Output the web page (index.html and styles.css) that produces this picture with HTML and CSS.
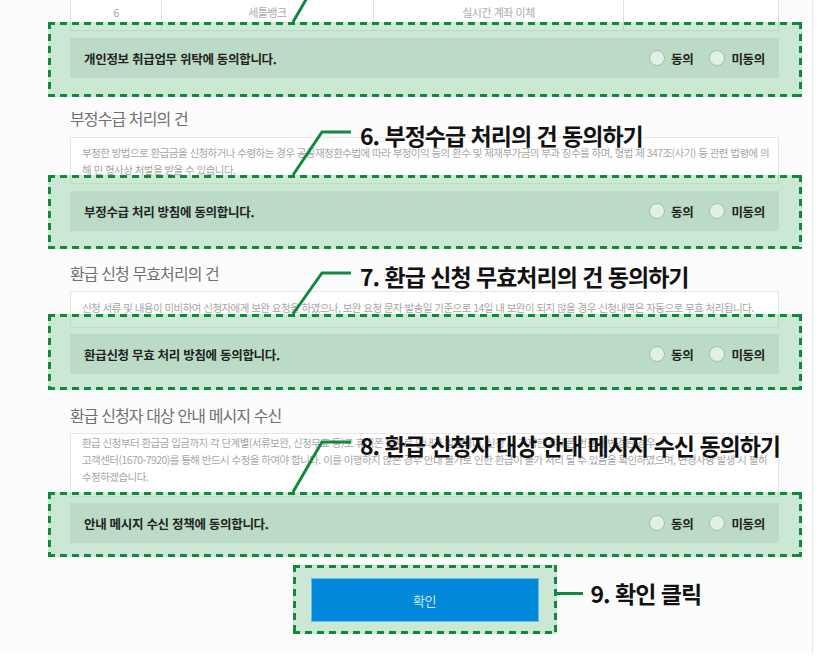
FILE: index.html
```html
<!DOCTYPE html>
<html lang="ko">
<head>
    <meta charset="UTF-8">
    <meta name="viewport" content="width=device-width, initial-scale=1.0">
    <title>환급 신청 동의</title>
    <link rel="stylesheet" href="styles.css">
</head>
<body>
    <div class="page">
        <div class="bank-table">
            <div class="cell">6</div>
            <div class="cell">세틀뱅크</div>
            <div class="cell">실시간 계좌 이체</div>
            <div class="cell"></div>
        </div>

        <div class="hl hl-1">
            <div class="callout callout-5">
                <svg width="62" height="53" viewBox="0 0 62 53"><polyline points="61,2 32,2 3,52" /></svg>
            </div>
            <div class="agree-row">
                <span class="agree-text">개인정보 취급업무 위탁에 동의합니다.</span>
                <div class="choices">
                    <label class="choice"><span class="radio"></span>동의</label>
                    <label class="choice"><span class="radio"></span>미동의</label>
                </div>
            </div>
        </div>

        <h3 class="sec-title sec-2">부정수급 처리의 건</h3>
        <div class="desc desc-2">부정한 방법으로 환급금을 신청하거나 수령하는 경우 공공재정환수법에 따라 부정이익 등의 환수 및 제재부가금의 부과 징수를 하며, 형법 제 347조(사기) 등 관련 법령에 의<br>해 민 형사상 처벌을 받을 수 있습니다.</div>
        <div class="hl hl-2">
            <div class="callout callout-6">
                <svg width="62" height="46" viewBox="0 0 62 46"><polyline points="61,2 32,2 3,45" /></svg>
                <span class="callout-text">6. 부정수급 처리의 건 동의하기</span>
            </div>
            <div class="agree-row">
                <span class="agree-text">부정수급 처리 방침에 동의합니다.</span>
                <div class="choices">
                    <label class="choice"><span class="radio"></span>동의</label>
                    <label class="choice"><span class="radio"></span>미동의</label>
                </div>
            </div>
        </div>

        <h3 class="sec-title sec-3">환급 신청 무효처리의 건</h3>
        <div class="desc desc-3">신청 서류 및 내용이 미비하여 신청자에게 보완 요청을 하였으나, 보완 요청 문자 발송일 기준으로 14일 내 보완이 되지 않을 경우 신청내역은 자동으로 무효 처리됩니다.</div>
        <div class="hl hl-3">
            <div class="callout callout-7">
                <svg width="62" height="44" viewBox="0 0 62 44"><polyline points="61,2 32,2 3,43" /></svg>
                <span class="callout-text">7. 환급 신청 무효처리의 건 동의하기</span>
            </div>
            <div class="agree-row">
                <span class="agree-text">환급신청 무효 처리 방침에 동의합니다.</span>
                <div class="choices">
                    <label class="choice"><span class="radio"></span>동의</label>
                    <label class="choice"><span class="radio"></span>미동의</label>
                </div>
            </div>
        </div>

        <h3 class="sec-title sec-4">환급 신청자 대상 안내 메시지 수신</h3>
        <div class="desc desc-4">환급 신청부터 환급금 입금까지 각 단계별(서류보완, 신청무효 등)로 휴대폰 문자로 안내가 발송되며, 신청 시 기재한 휴대폰 번호가 변경된 경우<br>고객센터(1670-7920)를 통해 반드시 수정을 하여야 합니다. 이를 이행하지 않은 경우 안내 불가로 인한 환급이 불가 처리 될 수 있음을 확인하였으며, 변경사항 발생 시 필히<br>수정하겠습니다.</div>
        <div class="hl hl-4">
            <div class="callout callout-8">
                <svg width="62" height="53" viewBox="0 0 62 53"><polyline points="61,2 32,2 3,52" /></svg>
                <span class="callout-text">8. 환급 신청자 대상 안내 메시지 수신 동의하기</span>
            </div>
            <div class="agree-row">
                <span class="agree-text">안내 메시지 수신 정책에 동의합니다.</span>
                <div class="choices">
                    <label class="choice"><span class="radio"></span>동의</label>
                    <label class="choice"><span class="radio"></span>미동의</label>
                </div>
            </div>
        </div>

        <div class="hl hl-btn">
            <button class="confirm-btn">확인</button>
            <div class="callout-side">
                <span class="side-line"></span>
                <span class="callout-text">9. 확인 클릭</span>
            </div>
        </div>
    </div>
</body>
</html>
```

FILE: styles.css
```css
body {
    margin: 0;
    padding: 0;
    background: #ffffff;
    font-family: "Noto Sans CJK KR", "Noto Sans", sans-serif;
    overflow: hidden;
}

.page {
    box-sizing: border-box;
    width: 813px;
    min-height: 100vh;
    padding: 0 33px 0 70px;
    background: #fcfcfc;
    border-right: 1px solid #e8e8e8;
}

/* payment table (only last row visible) */
.bank-table {
    display: grid;
    grid-template-columns: 91px 212px 250px 155px;
    margin-top: -6px;
    border-left: 1px solid #e2e2e2;
}
.cell {
    box-sizing: border-box;
    height: 37px;
    display: flex;
    align-items: center;
    justify-content: center;
    border-right: 1px solid #e2e2e2;
    border-bottom: 1px solid #e2e2e2;
    background: #fff;
    font-size: 11px;
    color: #aaa;
    letter-spacing: -0.5px;
}

/* green dashed highlight */
.hl {
    position: relative;
    margin-left: -22px;
    margin-right: -23px;
    padding-left: 22px;
    padding-right: 23px;
    background:
        repeating-linear-gradient(90deg, #11893c 0 7px, transparent 7px 12px) left top / 100% 3px no-repeat,
        repeating-linear-gradient(90deg, #11893c 0 7px, transparent 7px 12px) left bottom / 100% 3px no-repeat,
        repeating-linear-gradient(180deg, #11893c 0 7px, transparent 7px 12px) left top / 3px 100% no-repeat,
        repeating-linear-gradient(180deg, #11893c 0 7px, transparent 7px 12px) right top / 3px 100% no-repeat,
        rgba(120, 200, 145, 0.38);
}
.hl-1 { margin-top: -9px; padding-top: 16px; padding-bottom: 19px; }
.hl-2 { margin-top: -9px; padding-top: 16px; padding-bottom: 18px; }
.hl-3 { margin-top: -14px; padding-top: 20px; padding-bottom: 16px; }
.hl-4 { margin-top: -5px; padding-top: 11px; padding-bottom: 14px; }

.hl-btn {
    width: fit-content;
    margin: 8px auto 0;
    padding: 13px 18px 12px;
}

.agree-row {
    height: 40px;
    display: flex;
    align-items: center;
    justify-content: space-between;
    padding: 0 14px;
    background: #bcdbc6;
    font-size: 12.5px;
    font-weight: 700;
    color: #222;
    letter-spacing: -0.3px;
}
.choices {
    display: flex;
    gap: 16px;
}
.choice {
    display: flex;
    align-items: center;
    gap: 6px;
}
.radio {
    box-sizing: border-box;
    width: 16px;
    height: 16px;
    border-radius: 50%;
    background: #e2efe6;
    border: 1px solid #9fbfa9;
}

/* section titles and text boxes */
.sec-title {
    margin: 0;
    font-size: 16px;
    line-height: 20px;
    font-weight: 400;
    color: #707070;
    letter-spacing: -0.9px;
}
.sec-2 { margin-top: 11px; }
.sec-3 { margin-top: 14px; }
.sec-4 { margin-top: 15px; }

.desc {
    box-sizing: border-box;
    margin-top: 8px;
    padding: 6px 11px 0;
    background: #fff;
    border: 1px solid #e6e6e6;
    font-size: 10.5px;
    line-height: 17px;
    color: #a6a6a6;
    letter-spacing: -0.55px;
    white-space: nowrap;
    overflow: hidden;
}
.desc-2 { margin-top: 9px; height: 47px; }
.desc-3 { height: 37px; padding-top: 7px; }
.desc-4 { height: 64px; padding-top: 0; }

/* callouts */
.callout {
    position: absolute;
    left: 242px;
    display: flex;
    align-items: flex-start;
}
.callout svg polyline {
    fill: none;
    stroke: #11893c;
    stroke-width: 3;
}
.callout-5 { top: -52px; }
.callout-6 { top: -45px; }
.callout-7 { top: -43px; }
.callout-8 { top: -52px; }

.callout-text {
    margin-left: 8px;
    margin-top: -10px;
    font-size: 23px;
    line-height: 30px;
    font-weight: 700;
    color: #111;
    letter-spacing: -1px;
    white-space: nowrap;
}

.callout-side {
    position: absolute;
    left: 100%;
    top: 13px;
    height: 30px;
    display: flex;
    align-items: center;
}
.callout-side .callout-text {
    margin-top: 0;
}
.side-line {
    width: 26px;
    height: 3px;
    background: #11893c;
}

.confirm-btn {
    display: block;
    box-sizing: border-box;
    width: 228px;
    height: 44px;
    margin: 0;
    background: #0288d8;
    border: 1px solid #6bbcec;
    color: #cfe7f7;
    font-family: "Noto Sans CJK KR", "Noto Sans", sans-serif;
    font-size: 13px;
    letter-spacing: -0.5px;
    cursor: pointer;
}
```
